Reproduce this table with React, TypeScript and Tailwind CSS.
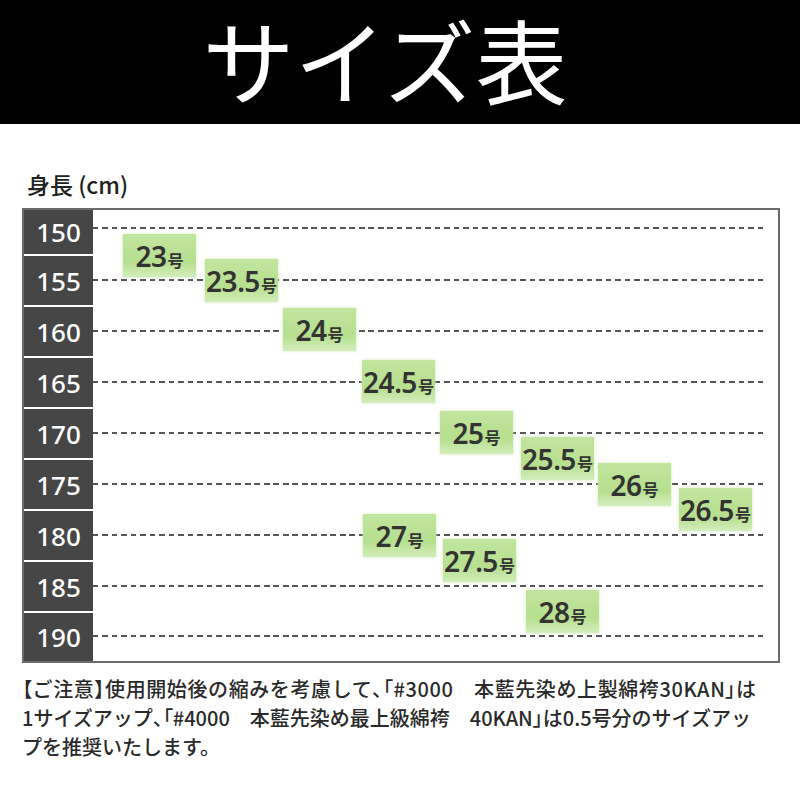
const HEIGHTS = [150, 155, 160, 165, 170, 175, 180, 185, 190];

// row heights inside the chart box (first row is cut off at the top)
const ROW_H = ["h-[44px]", "h-[51px]", "h-[51px]", "h-[51px]", "h-[51px]", "h-[51px]", "h-[51px]", "h-[51px]", "h-[50px]"];

const SIZES = [
    { num: "23", left: 30, top: 24 },
    { num: "23.5", left: 112, top: 49 },
    { num: "24", left: 190, top: 98 },
    { num: "24.5", left: 269, top: 150 },
    { num: "25", left: 347, top: 201 },
    { num: "25.5", left: 428, top: 227 },
    { num: "26", left: 505, top: 253 },
    { num: "26.5", left: 586, top: 278 },
    { num: "27", left: 270, top: 304 },
    { num: "27.5", left: 350, top: 329 },
    { num: "28", left: 433, top: 380 },
];

function SizeBadge({ num, left, top }: { num: string; left: number; top: number }) {
    return (
        <div
            className="absolute w-[73px] h-[43px] flex items-center justify-center bg-[linear-gradient(180deg,#c2e59f_0%,#b6df8e_65%,#d3eebd_100%)] shadow-[0_0_3px_#cfeab6]"
            style={{ left, top }}
        >
            <span className="text-[#333] leading-none whitespace-nowrap">
                <span className="font-['Noto_Sans',sans-serif] font-semibold text-[28px] tracking-[-0.5px]">{num}</span>
                <span className="font-['Noto_Sans_CJK_JP',sans-serif] font-bold text-[16px] ml-[1px]">号</span>
            </span>
        </div>
    );
}

// narrow punctuation, as in the original artwork
function P({ children }: { children: string }) {
    return <span className="[font-feature-settings:'palt']">{children}</span>;
}

export default function App() {
    return (
        <div className="w-[800px] h-[800px] bg-white overflow-hidden font-['Noto_Sans_CJK_JP','Noto_Sans',sans-serif]">
            {/* Title band */}
            <div className="h-[124px] bg-black flex items-start justify-center pr-[30px]">
                <h1 className="text-white text-[92px] font-normal leading-[116px]">サイズ表</h1>
            </div>

            <div className="pl-[22px]">
                <div className="mt-[49px] ml-[5px] text-[23px] leading-none font-medium text-[#222]">身長 (cm)</div>

                {/* Chart */}
                <div className="mt-[12px] w-[758px] h-[455px] border-2 border-[#6b6b6b] flex">
                    <div className="w-[69px] bg-[#464646] flex flex-col">
                        {HEIGHTS.map((h, i) => (
                            <div
                                key={h}
                                className={`${ROW_H[i]} flex items-center justify-center ${i > 0 ? "border-t-2 border-white" : ""}`}
                            >
                                <span className="font-['Noto_Sans',sans-serif] font-medium text-[26px] leading-none text-white">{h}</span>
                            </div>
                        ))}
                    </div>

                    <div className="relative flex-1 flex flex-col">
                        {HEIGHTS.map((h, i) => (
                            <div
                                key={h}
                                className={`${ROW_H[i]} flex ${i === 0 ? "items-start pt-[17px]" : "items-center"} pr-[15px]`}
                            >
                                <div className="h-[2px] w-full bg-[repeating-linear-gradient(90deg,#555_0_5.5px,transparent_5.5px_9.5px)]" />
                            </div>
                        ))}

                        {SIZES.map((s) => (
                            <SizeBadge key={s.num} {...s} />
                        ))}
                    </div>
                </div>

                {/* Note */}
                <div className="mt-[11px] text-[20px] leading-[29px] font-medium text-[#2a2a2a] whitespace-nowrap">
                    <div className="tracking-[0.6px]">
                        <P>【</P>ご注意<P>】</P>使用開始後の縮みを考慮して<P>、「</P>#3000　本藍先染め上製綿袴30KAN<P>」</P>は
                    </div>
                    <div>
                        1サイズアップ<P>、「</P>#4000　本藍先染め最上級綿袴　40KAN<P>」</P>は0.5号分のサイズアッ
                    </div>
                    <div>プを推奨いたします。</div>
                </div>
            </div>
        </div>
    );
}
